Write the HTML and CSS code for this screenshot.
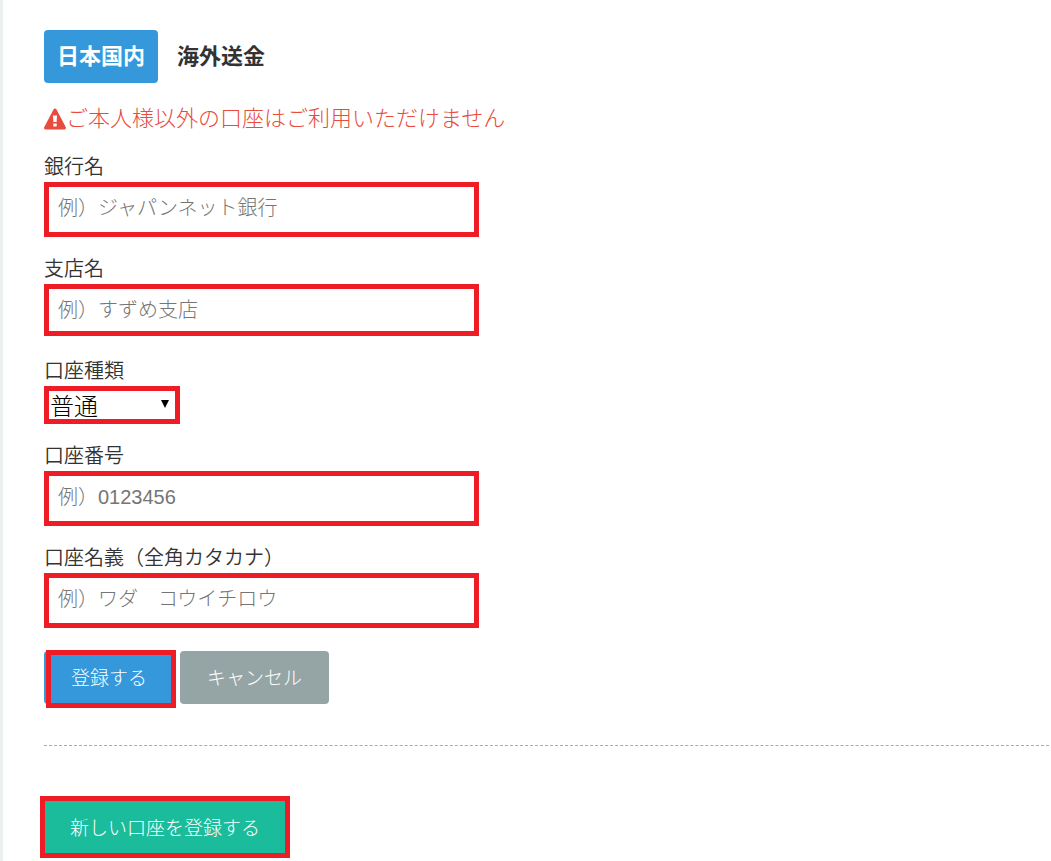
FILE: index.html
```html
<!DOCTYPE html>
<html lang="ja">
<head>
  <meta charset="UTF-8">
  <meta name="viewport" content="width=device-width, initial-scale=1">
  <title>口座登録</title>
  <link rel="stylesheet" href="styles.css">
</head>
<body>
<main class="content">
  <nav class="tabs">
    <a class="tab active" href="#domestic">日本国内</a>
    <a class="tab" href="#overseas">海外送金</a>
  </nav>
  <p class="alert">
    <svg class="icon-warning" viewBox="0 0 22 22" aria-hidden="true">
      <path fill="currentColor" fill-rule="evenodd" d="M11 .5c.7 0 1.2.4 1.5 1l9.200 17.500c.7 1.300-.1 2.500-1.500 2.500H1.800C.4 21.500-.4 20.300.3 19L9.500 1.500c.3-.6.8-1 1.500-1zM9 7.500l.4 6.500h3.200l.4-6.500zM9.300 15.500v3h3.400v-3z"/>
    </svg>
    <span>ご本人様以外の口座はご利用いただけません</span>
  </p>
  <form class="bank-form">
    <div class="field">
      <label for="bank">銀行名</label>
      <input type="text" id="bank" placeholder="例）ジャパンネット銀行">
    </div>
    <div class="field">
      <label for="branch">支店名</label>
      <input class="short" type="text" id="branch" placeholder="例）すずめ支店">
    </div>
    <div class="field">
      <label for="type">口座種類</label>
      <div class="select">
        <select id="type">
          <option>普通</option>
          <option>当座</option>
        </select>
        <svg class="arrow" viewBox="0 0 8 8" aria-hidden="true"><path d="M0 0h8L4 8z"/></svg>
      </div>
    </div>
    <div class="field">
      <label for="number">口座番号</label>
      <input type="text" id="number" placeholder="例）0123456">
    </div>
    <div class="field">
      <label for="holder">口座名義（全角カタカナ）</label>
      <input type="text" id="holder" placeholder="例）ワダ　コウイチロウ">
    </div>
    <div class="actions">
      <button class="btn btn-primary" type="submit">登録する</button>
      <button class="btn btn-cancel" type="button">キャンセル</button>
    </div>
  </form>
  <hr class="divider">
  <button class="btn btn-new" type="button">新しい口座を登録する</button>
</main>
</body>
</html>
```
FILE: styles.css
```css
* {
  box-sizing: border-box;
}

body {
  margin: 0;
  background: #fff;
  color: #333;
  font-family: "Liberation Sans", "Noto Sans CJK JP", sans-serif;
  font-size: 20px;
  font-weight: 300;
}

input, select, button {
  font-family: inherit;
  font-weight: inherit;
}

.content {
  min-height: 100vh;
  padding: 30px 2px 3px 41px;
  border-left: 3px solid #ecf0f1;
}

.tabs {
  display: flex;
  gap: 6px;
}

.tab {
  padding: 0 13px;
  border-radius: 4px;
  color: #333;
  font-size: 22px;
  font-weight: 700;
  line-height: 53px;
  text-decoration: none;
}

.tab.active {
  background: #3498db;
  color: #fff;
}

.alert {
  display: flex;
  align-items: center;
  margin: 20px 0 16px;
  color: #e74c3c;
  font-size: 22px;
  line-height: 32px;
}

.icon-warning {
  width: 22px;
  height: 22px;
}

.field {
  margin-bottom: 16px;
}

.field label {
  display: block;
  padding-top: 2px;
  font-weight: 350;
  line-height: 29px;
}

.field input {
  display: block;
  width: 100%;
  max-width: 435px;
  height: 55px;
  padding: 0 9px 3px;
  border: 5px solid #ee1c25;
  background: #fff;
  color: #333;
  font-size: 20px;
}

.field input.short {
  height: 52px;
  margin-bottom: 19px;
  padding-bottom: 0;
}

.field input::placeholder {
  color: #757575;
  opacity: 1;
}

.select {
  position: relative;
  width: 136px;
}

.select select {
  display: block;
  width: 100%;
  height: 38px;
  padding: 3px 1px 0;
  border: 5px solid #ee1c25;
  border-radius: 0;
  appearance: none;
  background: #fff;
  color: #000;
  font-size: 24px;
  line-height: 25px;
}

.arrow {
  position: absolute;
  top: 14px;
  right: 11px;
  width: 8px;
  height: 8px;
  pointer-events: none;
}

.actions {
  display: flex;
  gap: 6px;
  padding-top: 7px;
}

.btn {
  height: 53px;
  padding: 0 27px 2px;
  border: 0;
  border-radius: 4px;
  color: #fff;
  font-size: 19px;
}

.btn-primary {
  position: relative;
  width: 130px;
  padding: 0 0 2px;
  background: #3498db;
}

.btn-primary::after {
  content: "";
  position: absolute;
  inset: -1px -2px -4px 2px;
  border: 5px solid #ee1c25;
}

.btn-cancel {
  background: #95a5a6;
}

.divider {
  margin: 41px 0 50px;
  border: 0;
  border-top: 1px dashed #aaa;
}

.btn-new {
  display: block;
  height: 62px;
  margin-left: -4px;
  padding: 0 25px 2px;
  border: 5px solid #ee1c25;
  border-radius: 0;
  background: #1abc9c;
}
```
